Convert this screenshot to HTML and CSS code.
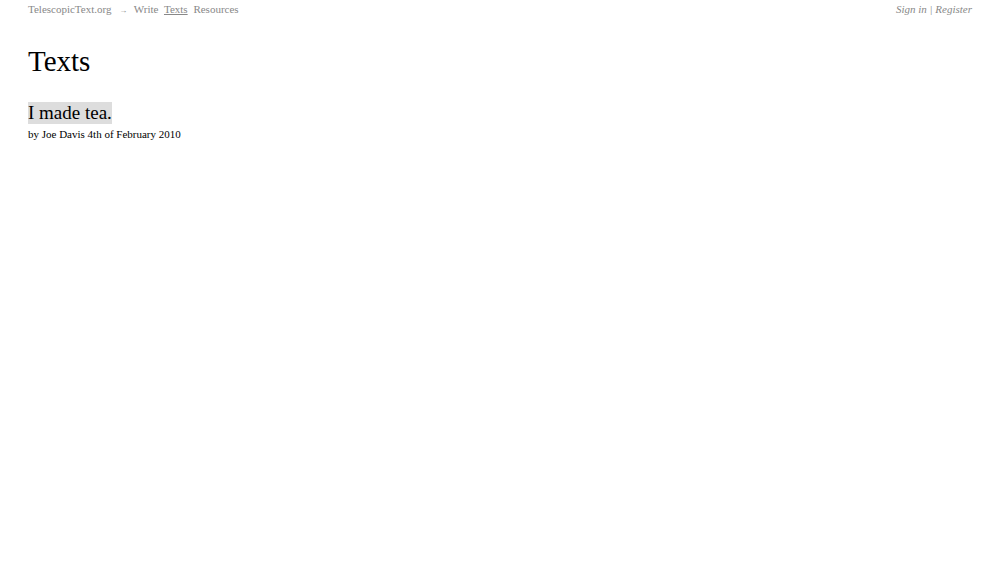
FILE: index.html
```html
<!DOCTYPE html>
<html lang="en">
<head>
    <meta charset="UTF-8">
    <link rel="stylesheet" href="styles.css">
    <title>Texts - TelescopicText.org</title>
</head>
<body>
    <div id="nav">
        <div class="left">
            <a href="#" class="site">TelescopicText.org</a>
            <span class="arrow">&rarr;</span>
            <a href="#">Write</a>
            <a href="#" class="current">Texts</a>
            <a href="#">Resources</a>
        </div>
        <div class="right"><a href="#">Sign in</a> | <a href="#">Register</a></div>
    </div>
    <div id="main">
        <h1>Texts</h1>
        <div class="text">
            <a href="#" class="title">I made tea.</a>
            <p class="byline">by Joe Davis 4th of February 2010</p>
        </div>
    </div>
</body>
</html>
```
FILE: styles.css
```css
body{ margin: 0; padding: 0 28px; font-family: "Liberation Serif", "Times New Roman", serif; color: #000; background: #fff; }
a{ color: inherit; text-decoration: none; }
#nav{ display: flex; justify-content: space-between; padding-top: 2px; font-size: 11px; color: #888; line-height: 14px; }
#nav .left a{ margin-right: 3px; }
#nav .arrow{ font-size: 8px; margin: 0 4px 0 2px; }
#nav .current{ text-decoration: underline; }
#nav .right{ font-style: italic; }
h1{ font-size: 29px; font-weight: normal; margin: 25px 0 0; line-height: 36px; }
.text{ margin-top: 23px; }
.title{ font-size: 19px; background: #dddddd; line-height: 22px; display: inline-block; }
.byline{ font-size: 11px; margin: 3px 0 0; line-height: 14px; }
```
